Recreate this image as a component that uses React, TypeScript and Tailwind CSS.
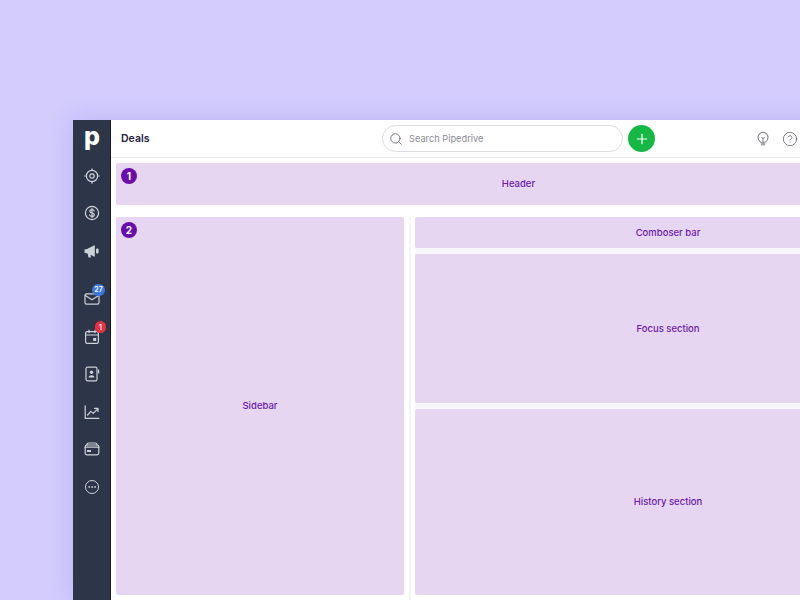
import { Search, Plus, CircleHelp, Ellipsis } from "lucide-react";

const font = { fontFamily: "Inter, sans-serif" };

const NavIcon = ({ children, badge, badgeClass }: { children: React.ReactNode; badge?: string; badgeClass?: string }) => (
  <div className="relative flex h-[37.5px] w-full items-center justify-center">
    {children}
    {badge && (
      <span
        className={`absolute flex h-[12px] items-center justify-center rounded-full text-[7px] font-semibold leading-none text-white ${badgeClass}`}
      >
        {badge}
      </span>
    )}
  </div>
);

const iconProps = {
  width: 16,
  height: 16,
  viewBox: "0 0 16 16",
  fill: "none",
  stroke: "#cdd1d8",
  strokeWidth: 1.2,
  strokeLinecap: "round" as const,
  strokeLinejoin: "round" as const,
};

const Block = ({ label, className, num }: { label: string; className: string; num?: string }) => (
  <div className={`relative flex items-center justify-center rounded-[2px] bg-[#e7d6f2] ${className}`}>
    {num && (
      <span className="absolute left-[5px] top-[5px] flex h-[16px] w-[16px] items-center justify-center rounded-full bg-[#6a0dad] text-[10px] font-bold leading-none text-white">
        {num}
      </span>
    )}
    <span className="mt-[1px] text-[9.5px] font-medium text-[#6a1aa8]">{label}</span>
  </div>
);

export default function App() {
  return (
    <div className="h-[600px] w-[800px] overflow-hidden bg-[#d3ccfd] pl-[73px] pt-[120px]" style={font}>
      <div className="flex h-[480px] w-[848px] bg-white shadow-[0_0_24px_rgba(90,70,200,0.18)]">
        <div className="flex w-[38px] shrink-0 flex-col items-center border-r border-r-[#14181f] bg-[#2d3648]">
          <div className="flex h-[37px] w-full items-center justify-center">
            <span className="ml-[1px] mt-[-5px] text-[25px] font-extrabold leading-none text-white">p</span>
          </div>
          <NavIcon>
            <svg {...iconProps}>
              <circle cx="8" cy="8" r="5.6" />
              <circle cx="8" cy="8" r="2.2" />
              <path d="M8 .8v1.6M8 13.6v1.6M.8 8h1.6M13.6 8h1.6" />
            </svg>
          </NavIcon>
          <NavIcon>
            <svg {...iconProps}>
              <circle cx="8" cy="8" r="6.6" />
              <path d="M10.2 6c-.3-.9-1.1-1.4-2.2-1.4-1.3 0-2.2.6-2.2 1.7 0 2.4 4.5 1 4.5 3.4 0 1.1-1 1.7-2.3 1.7-1.2 0-2.1-.6-2.4-1.5M8 3.4v9.2" />
            </svg>
          </NavIcon>
          <NavIcon>
            <svg width="16" height="16" viewBox="0 0 16 16" fill="#cdd1d8">
              <path d="M.5 6.5 3 6l7-3.5.8-.3v11.6l-.8-.3L6.5 11.8 6.8 14.5H4.5L3.6 10.4.5 9.8z" />
              <rect x="12" y="5.5" width="2.6" height="5" rx="1" />
            </svg>
          </NavIcon>
          <div className="h-[11px] shrink-0" />
          <NavIcon badge="27" badgeClass="left-[19px] top-[3px] w-[13px] bg-[#3b76dc]">
            <svg {...iconProps}>
              <rect x="1" y="2.8" width="14" height="10.4" rx="1.6" />
              <path d="m1.4 4.4 6.6 4.4 6.6-4.4" />
            </svg>
          </NavIcon>
          <NavIcon badge="1" badgeClass="left-[22px] top-[3px] w-[11px] bg-[#e8303f]">
            <svg {...iconProps}>
              <rect x="1.6" y="2.6" width="12.8" height="11.8" rx="1.6" />
              <path d="M1.6 6h12.8M5 1.2v2.4M11 1.2v2.4" />
              <rect x="9.2" y="9" width="3" height="3" fill="#cdd1d8" stroke="none" />
            </svg>
          </NavIcon>
          <NavIcon>
            <svg {...iconProps}>
              <rect x="2" y="1.2" width="11" height="13.6" rx="1.6" />
              <path d="M14.6 4v3" />
              <circle cx="7.5" cy="6.2" r="1.7" fill="#cdd1d8" stroke="none" />
              <path d="M4.6 11.4c0-3 5.8-3 5.8 0z" fill="#cdd1d8" stroke="none" />
            </svg>
          </NavIcon>
          <NavIcon>
            <svg {...iconProps}>
              <path d="M1.2 1.8v12.6h13.6" />
              <path d="m3.6 11 3.2-3.6 2.4 2L14 4.6M10.6 4.4H14v3.2" />
            </svg>
          </NavIcon>
          <NavIcon>
            <svg {...iconProps}>
              <rect x="1.2" y="4" width="13.6" height="9.8" rx="1.8" />
              <path d="M3 4c0-1.4.6-2 2-2h6c1.4 0 2 .6 2 2M1.2 6.2h13.6" />
              <rect x="3" y="9" width="4" height="2" fill="#cdd1d8" stroke="none" />
            </svg>
          </NavIcon>
          <NavIcon>
            <div className="flex h-[14px] w-[14px] items-center justify-center rounded-full border-[1.2px] border-[#cdd1d8]">
              <Ellipsis size={10} color="#cdd1d8" strokeWidth={2.4} />
            </div>
          </NavIcon>
        </div>
        <div className="flex min-w-0 flex-1 flex-col">
          <div className="flex h-[38px] shrink-0 items-center border-b border-b-[#e9e9ee] pl-[10px]">
            <span className="w-[261px] text-[10.5px] font-semibold text-[#24203a]">Deals</span>
            <div className="flex h-[27px] w-[241px] items-center gap-[6px] rounded-full border border-[#dcdce2] pl-[6px]">
              <Search size={14} color="#6f6f78" strokeWidth={1.6} />
              <span className="text-[9.25px] text-[#8b8b94]">Search Pipedrive</span>
            </div>
            <div className="ml-[5px] flex h-[27px] w-[27px] items-center justify-center rounded-full bg-[#16b844]">
              <Plus size={16} color="#fff" strokeWidth={1.8} />
            </div>
            <div className="ml-[100px] flex items-center gap-[11px]">
              <svg width="16" height="16" viewBox="0 0 16 16" fill="none" stroke="#85858d" strokeWidth="1.1" strokeLinecap="round" strokeLinejoin="round">
                <path d="M5.6 11.2C4.2 10 3 8.6 3 6.4a5 5 0 0 1 10 0c0 2.2-1.2 3.6-2.6 4.8z" />
                <path d="M6.8 6.6 8 7.6l1.2-1M8 7.6v3.6" />
                <rect x="5.8" y="11.6" width="4.4" height="3" rx=".8" fill="#a5a5ad" stroke="none" />
              </svg>
              <CircleHelp size={16} color="#6f6f78" strokeWidth={1.3} />
            </div>
          </div>
          <div className="flex min-h-0 flex-1 flex-col pl-[5px]">
            <Block label="Header" num="1" className="mt-[5px] h-[42px] shrink-0" />
            <div className="mt-[12px] flex min-h-0 flex-1 pb-[5px]">
              <Block label="Sidebar" num="2" className="w-[288px] shrink-0" />
              <div className="mx-[5px] mb-[-5px] w-[2px] shrink-0 bg-[#f3f2f8]" />
              <div className="ml-[-1px] flex flex-1 flex-col gap-[6px] bg-[#f7f6fb]">
                <Block label="Comboser bar" className="h-[31px] shrink-0" />
                <Block label="Focus section" className="h-[149px] shrink-0" />
                <Block label="History section" className="flex-1" />
              </div>
            </div>
          </div>
        </div>
      </div>
    </div>
  );
}
